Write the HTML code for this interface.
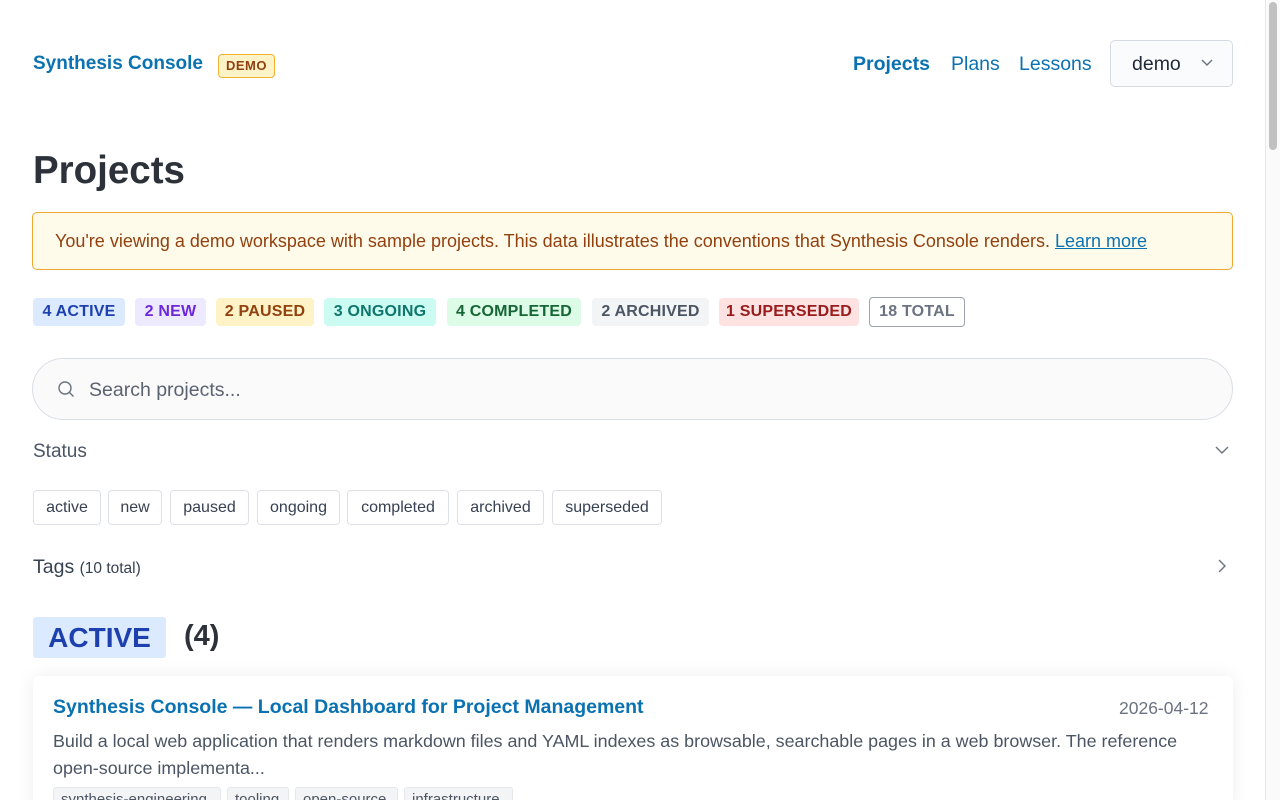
<!DOCTYPE html>
<html><head><meta charset="utf-8"><style>
*{box-sizing:border-box;margin:0;padding:0}
html,body{width:1280px;height:800px;overflow:hidden}
body{background:#fff;font-family:"Liberation Sans",sans-serif;position:relative;color:#1f2937}
.a{position:absolute;white-space:nowrap}
.sb{position:absolute;left:1265px;top:0;width:15px;height:800px;background:#fafafa;border-left:1px solid #e8e8e8}
.sb div{position:absolute;left:3px;top:2px;width:8px;height:148px;background:#c1c1c1;border-radius:4px}
.pill{position:absolute;top:298px;height:28px;line-height:28px;border-radius:4px;font-weight:bold;font-size:16px;text-align:center;letter-spacing:.2px}
.chip{position:absolute;top:490px;height:35px;line-height:33px;border:1px solid #dde1e6;border-radius:4px;font-size:16px;color:#374151;text-align:center}
.tag{position:absolute;top:787px;height:26px;border:1px solid #e5e7eb;background:#f3f4f6;border-radius:3px;font-size:15px;color:#4b5563;line-height:24px;padding:0 7px}
</style></head><body>
<div class="a" style="left:33px;top:53px;font-size:19px;font-weight:bold;color:#0b72b1">Synthesis Console</div>
<div class="a" style="left:218px;top:54px;width:57px;height:24px;border:1px solid #f0b232;background:#fef3c7;border-radius:4px;color:#92400e;font-size:13px;font-weight:bold;text-align:center;line-height:22px;letter-spacing:.5px">DEMO</div>
<div class="a" style="left:853px;top:53px;font-size:19.5px;font-weight:bold;color:#0b72b1">Projects</div>
<div class="a" style="left:951px;top:53px;font-size:19.5px;color:#0b72b1">Plans</div>
<div class="a" style="left:1019px;top:53px;font-size:19.5px;color:#0b72b1">Lessons</div>
<div class="a" style="left:1110px;top:40px;width:123px;height:47px;border:1px solid #d6dbe3;border-radius:5px;background:#fafbfc"></div>
<div class="a" style="left:1132px;top:53px;font-size:19.5px;color:#1f2937">demo</div>
<svg class="a" style="left:1200px;top:58px" width="14" height="10"><path d="M2 2l5 5 5-5" fill="none" stroke="#6b7280" stroke-width="1.4"/></svg>
<div class="a" style="left:33px;top:149px;font-size:38.5px;font-weight:bold;color:#2d3139">Projects</div>
<div class="a" style="left:32px;top:212px;width:1201px;height:58px;border:1px solid #f0a830;background:#fefbeb;border-radius:5px"></div>
<div class="a" style="left:55px;top:231px;font-size:18px;color:#92400e">You're viewing a demo workspace with sample projects. This data illustrates the conventions that Synthesis Console renders. <span style="color:#0b72b1;text-decoration:underline">Learn more</span></div>
<div class="pill" style="left:33px;width:92px;background:#dbeafe;color:#1e40af">4 ACTIVE</div>
<div class="pill" style="left:135px;width:71px;background:#ede9fe;color:#6d28d9">2 NEW</div>
<div class="pill" style="left:216px;width:98px;background:#fef3c7;color:#92400e">2 PAUSED</div>
<div class="pill" style="left:324px;width:112px;background:#ccfbf1;color:#0f766e">3 ONGOING</div>
<div class="pill" style="left:447px;width:134px;background:#dcfce7;color:#166534">4 COMPLETED</div>
<div class="pill" style="left:592px;width:117px;background:#f3f4f6;color:#4b5563">2 ARCHIVED</div>
<div class="pill" style="left:719px;width:140px;background:#fee2e2;color:#991b1b">1 SUPERSEDED</div>
<div class="pill" style="left:869px;width:96px;top:297px;height:30px;border:1.5px solid #9ca3af;background:#fff;color:#6b7280;line-height:27px">18 TOTAL</div>
<div class="a" style="left:32px;top:358px;width:1201px;height:62px;border:1px solid #d9dee5;border-radius:31px;background:#fafafb"></div>
<svg class="a" style="left:56px;top:380px" width="20" height="20"><circle cx="9" cy="8" r="6" fill="none" stroke="#6b7280" stroke-width="1.4"/><path d="M13.5 12.5l4 4" stroke="#6b7280" stroke-width="1.4"/></svg>
<div class="a" style="left:89px;top:379px;font-size:19.5px;color:#5b6270">Search projects...</div>
<div class="a" style="left:33px;top:441px;font-size:19px;color:#4b5563">Status</div>
<svg class="a" style="left:1214px;top:444px" width="16" height="12"><path d="M2 3l6 6 6-6" fill="none" stroke="#6b7280" stroke-width="1.4"/></svg>
<div class="chip" style="left:33px;width:68px">active</div>
<div class="chip" style="left:108px;width:54px">new</div>
<div class="chip" style="left:170px;width:79px">paused</div>
<div class="chip" style="left:257px;width:83px">ongoing</div>
<div class="chip" style="left:347px;width:102px">completed</div>
<div class="chip" style="left:457px;width:87px">archived</div>
<div class="chip" style="left:552px;width:110px">superseded</div>
<div class="a" style="left:33px;top:556px;font-size:19.5px;color:#374151">Tags <span style="font-size:15.5px">(10 total)</span></div>
<svg class="a" style="left:1216px;top:558px" width="12" height="16"><path d="M3 2l6 6-6 6" fill="none" stroke="#6b7280" stroke-width="1.4"/></svg>
<div class="a" style="left:33px;top:617px;width:133px;height:41px;background:#dbeafe;border-radius:3px;color:#1e40af;font-size:28px;font-weight:bold;text-align:center;line-height:41px">ACTIVE</div>
<div class="a" style="left:184px;top:620px;font-size:29px;font-weight:bold;color:#2d3139">(4)</div>
<div class="a" style="left:33px;top:676px;width:1200px;height:140px;background:#fff;border-radius:6px;box-shadow:0 0 18px rgba(0,0,0,.07)"></div>
<div class="a" style="left:53px;top:696px;font-size:19.5px;font-weight:bold;color:#0b72b1">Synthesis Console — Local Dashboard for Project Management</div>
<div class="a" style="left:1119px;top:698px;font-size:17.5px;color:#6b7280">2026-04-12</div>
<div class="a" style="left:53px;top:728px;font-size:17.9px;color:#4b5563;line-height:27px">Build a local web application that renders markdown files and YAML indexes as browsable, searchable pages in a web browser. The reference<br>open-source implementa...</div>
<div class="tag" style="left:53px;width:168px">synthesis-engineering</div>
<div class="tag" style="left:227px;width:62px">tooling</div>
<div class="tag" style="left:295px;width:103px">open-source</div>
<div class="tag" style="left:404px;width:109px">infrastructure</div>
<div class="sb"><div></div></div>
</body></html>
